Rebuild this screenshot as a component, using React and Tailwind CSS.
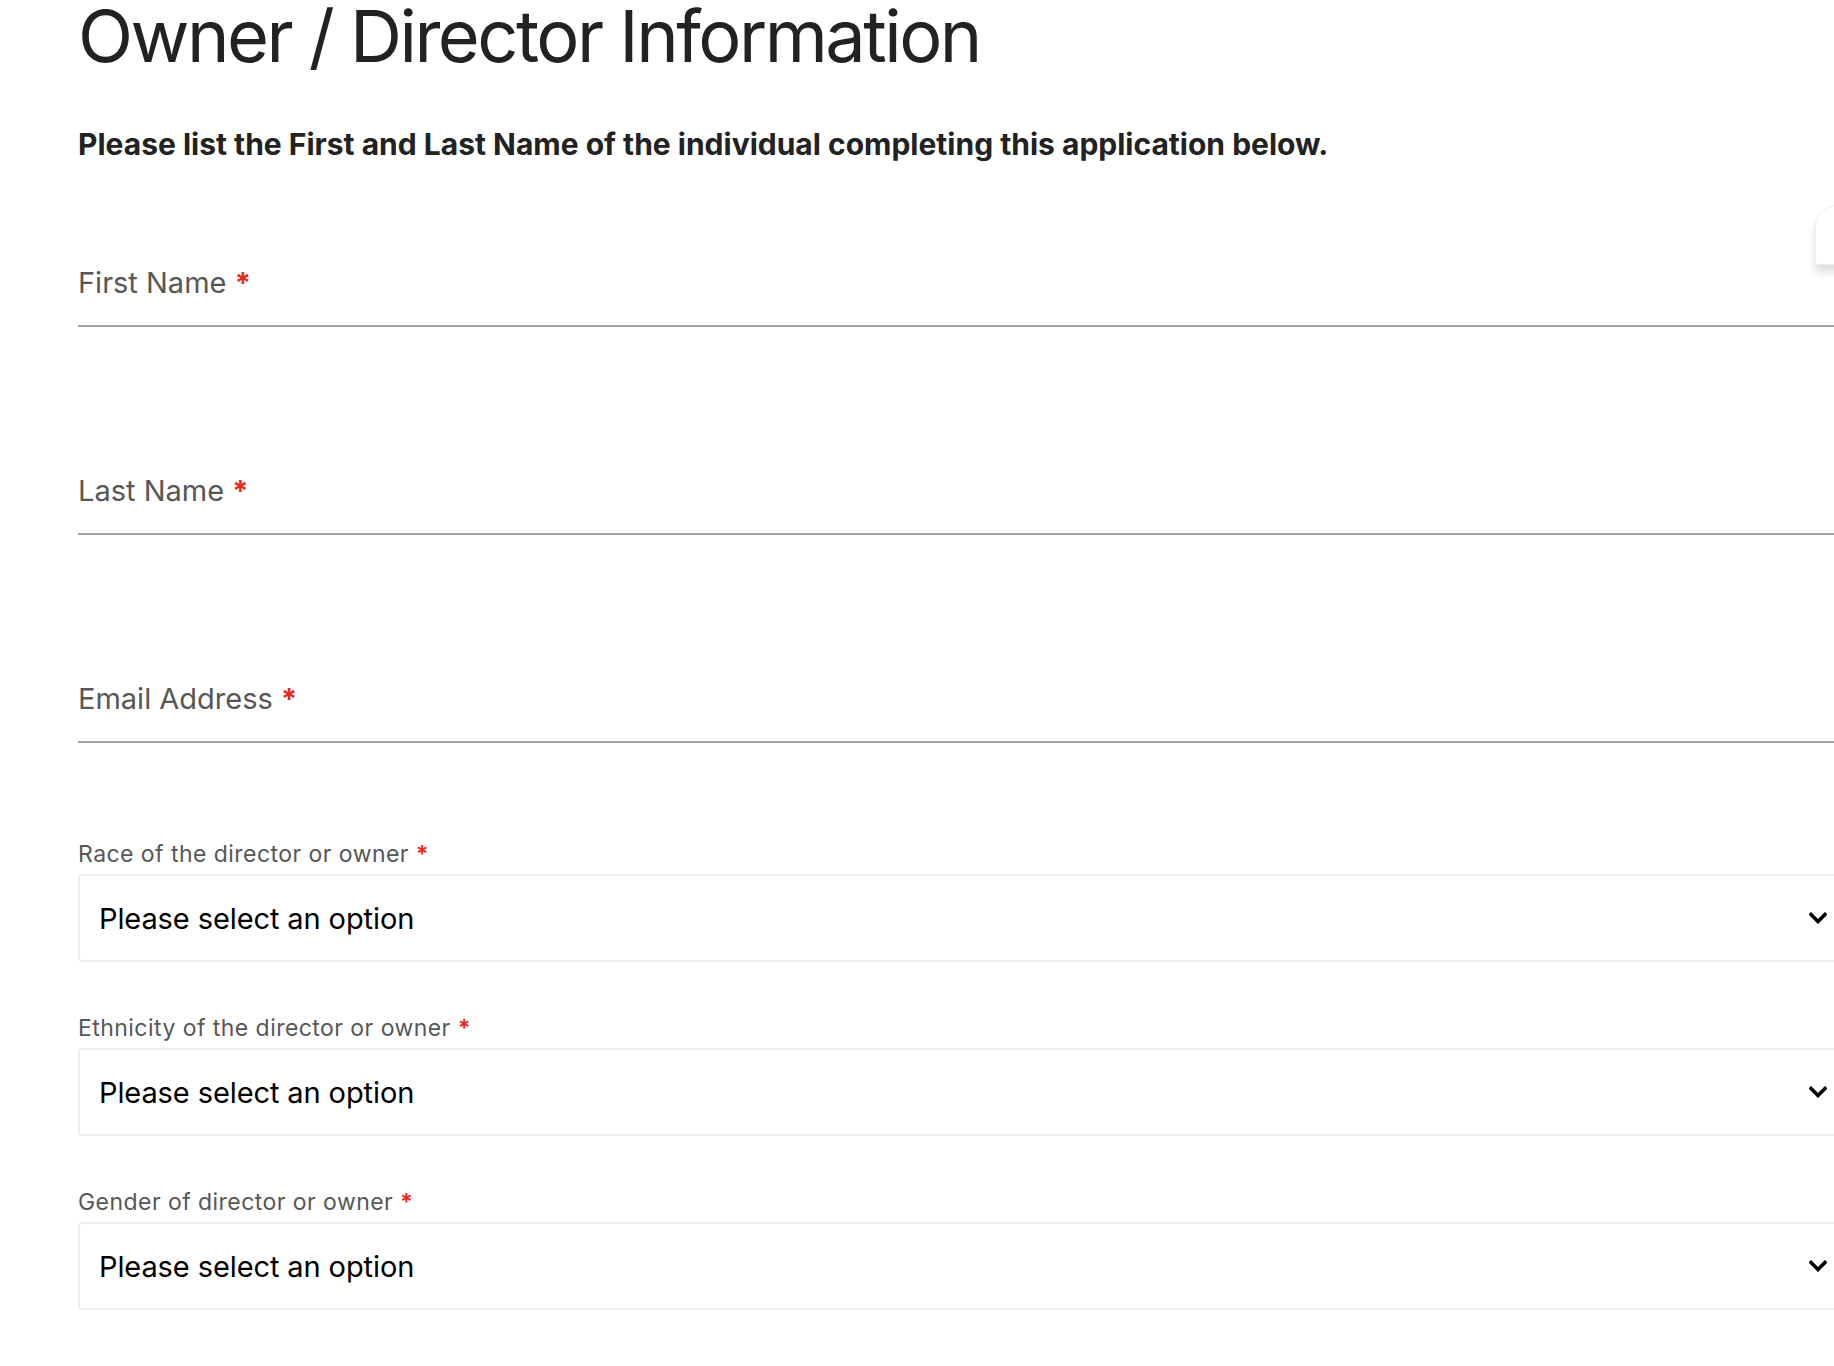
import React from 'react';

const font = { fontFamily: 'Inter, "Noto Sans", sans-serif' };

function Required({ size }) {
    return <span className={`text-[#e8291c] font-bold ${size}`}>*</span>;
}

function TextField({ label, first }) {
    return (
        <div className={`${first ? 'mt-[109px]' : 'mt-[149px]'} pb-[28px] border-b-2 border-[#a0a0a0]`}>
            <label className="block text-[29px] leading-none text-[#575757]">
                {label} <Required size="text-[29px]" />
            </label>
        </div>
    );
}

function SelectField({ label, first }) {
    return (
        <div className={first ? 'mt-[100px]' : 'mt-[55px]'}>
            <label className="block text-[23px] leading-none text-[#575757] tracking-[0.45px]">
                {label} <Required size="text-[23px]" />
            </label>
            <div className="mt-[8px] h-[88px] border-2 border-[#eeeeee] rounded-[4px] bg-white flex items-center justify-between pl-[19px] pr-[49px]">
                <span className="text-[29px] leading-none text-black tracking-[-0.1px]">Please select an option</span>
                <svg width="18" height="12" viewBox="0 0 18 12" fill="none">
                    <polyline points="2,2.5 9,9.5 16,2.5" stroke="#000" strokeWidth="3.6" strokeLinecap="square" />
                </svg>
            </div>
        </div>
    );
}

export default function App() {
    return (
        <div className="relative w-[1834px] h-[1366px] overflow-hidden bg-white" style={font}>
            {/* floating tab at the right edge */}
            <div className="absolute left-[1815px] top-[205px] w-[40px] h-[60px] bg-white border border-[#eeeeee] rounded-tl-[22px] rounded-bl-[3px] shadow-[0_7px_8px_rgba(0,0,0,0.14)]"></div>

            <div className="ml-[78px] w-[1800px]">
                <h1 className="text-[72px] leading-none font-normal text-[#222222] tracking-[-2.5px]">Owner / Director Information</h1>
                <p className="mt-[57px] text-[30px] leading-none font-bold text-[#222222]">
                    Please list the First and Last Name of the individual completing this application below.
                </p>

                <TextField label="First Name" first />
                <TextField label="Last Name" />
                <TextField label="Email Address" />

                <SelectField label="Race of the director or owner" first />
                <SelectField label="Ethnicity of the director or owner" />
                <SelectField label="Gender of director or owner" />
            </div>
        </div>
    );
}
